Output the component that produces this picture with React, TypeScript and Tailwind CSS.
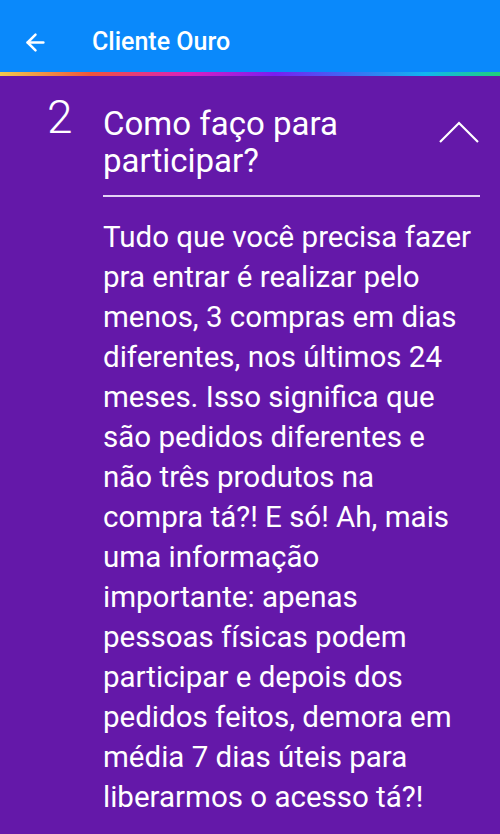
import { ArrowLeft } from "lucide-react";

const lines = [
  "Tudo que você precisa fazer",
  "pra entrar é realizar pelo",
  "menos, 3 compras em dias",
  "diferentes, nos últimos 24",
  "meses. Isso significa que",
  "são pedidos diferentes e",
  "não três produtos na",
  "compra tá?! E só! Ah, mais",
  "uma informação",
  "importante: apenas",
  "pessoas físicas podem",
  "participar e depois dos",
  "pedidos feitos, demora em",
  "média 7 dias úteis para",
  "liberarmos o acesso tá?!",
];

export default function App() {
  return (
    <div
      className="w-[500px] h-[834px] overflow-hidden bg-[#6418a9] text-white"
      style={{ fontFamily: "Roboto, 'Liberation Sans', sans-serif" }}
    >
      <header className="h-[72px] bg-[#0a89fb] flex items-center pt-[12px]">
        <ArrowLeft className="ml-[22px] w-[27px] h-[27px]" strokeWidth={2.2} />
        <h1 className="ml-[43px] text-[25px] font-medium">Cliente Ouro</h1>
      </header>
      <div className="h-[4px] bg-[linear-gradient(90deg,#f2c94c_0%,#f0553a_18%,#d91fc0_38%,#7a1ef0_55%,#3c6df5_70%,#11b5f0_85%,#1fd07a_100%)]" />

      <section className="flex pt-[29px] pr-[20px]">
        <div className="w-[103px] shrink-0 pl-[47px] -mt-[11px] text-[46px] font-light leading-[46px]">2</div>
        <div className="flex-1">
          <div className="flex items-start justify-between">
            <h2 className="text-[33px] leading-[37px]">
              Como faço para
              <br />
              participar?
            </h2>
            <svg width="42" height="24" viewBox="0 0 42 24" className="mt-[15px]" fill="none" stroke="white" strokeWidth="2.2">
              <path d="M2 22 L21 3 L40 22" />
            </svg>
          </div>
          <div className="mt-[16px] h-[2px] bg-[#e3d3f5]" />
          <p className="mt-[20px] text-[29.5px] leading-[40px] whitespace-nowrap">
            {lines.map((l, i) => (
              <span key={i} className="block">
                {l}
              </span>
            ))}
          </p>
        </div>
      </section>
    </div>
  );
}
